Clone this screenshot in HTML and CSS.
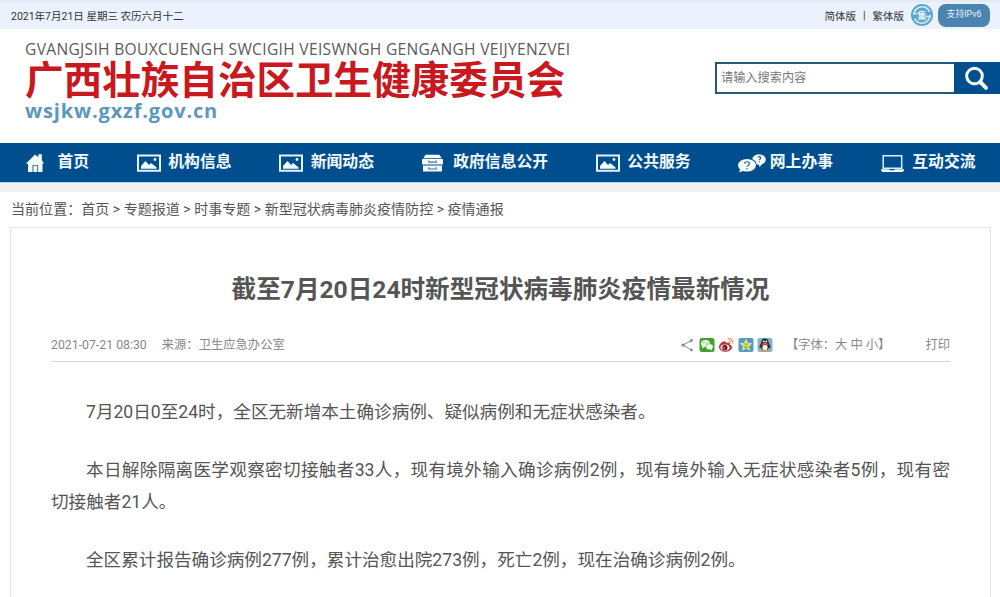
FILE: index.html
```html
<!DOCTYPE html>
<html lang="zh-CN">
<head>
    <meta charset="UTF-8">
    <title>广西壮族自治区卫生健康委员会</title>
    <link rel="stylesheet" href="styles.css">
</head>
<body>
    <div class="top-bar">
        <span class="date">2021年7月21日 星期三 农历六月十二</span>
        <div class="top-links">
            <a>简体版</a><span class="sep">|</span><a>繁体版</a>
            <svg class="badge" viewBox="0 0 22 22">
                <circle cx="11" cy="11" r="11" fill="#5fa5cf"/>
                <circle cx="11" cy="11" r="8.2" fill="none" stroke="#d8effb" stroke-width="1.6" stroke-dasharray="22 3.8"/>
                <path d="M2.5 9.5h4M15.5 12.5h4" stroke="#d8effb" stroke-width="1.5"/>
                <text x="11" y="14.5" text-anchor="middle" class="badge-text">集</text>
            </svg>
            <span class="ipv6">支持IPv6</span>
        </div>
    </div>
    <div class="header">
        <div class="logo">
            <div class="logo-zhuang">GVANGJSIH BOUXCUENGH SWCIGIH VEISWNGH GENGANGH VEIJYENZVEI</div>
            <div class="logo-name">广西壮族自治区卫生健康委员会</div>
            <div class="logo-url">wsjkw.gxzf.gov.cn</div>
        </div>
        <div class="search">
            <div class="search-input">请输入搜索内容</div>
            <div class="search-btn">
                <svg width="26" height="26" viewBox="0 0 26 26" fill="none" stroke="#f2fbff">
                    <circle cx="10.5" cy="11" r="7.8" stroke-width="3"/>
                    <path d="M16.2 17L22 22.8" stroke-width="4" stroke-linecap="round"/>
                </svg>
            </div>
        </div>
    </div>
    <div class="nav">
        <a class="nav-item">
            <svg class="nav-icon" viewBox="0 0 24 20">
                <path d="M0 10.4L9 1.5l3.4 2.8V1.2h3.4v6.1l2 2.6-1.3 1.1V19H2v-8z" fill="#f2fbff"/>
                <path d="M7 19v-6.5h4.5V19" fill="none" stroke="#5d7f9b" stroke-width="1.2"/>
            </svg>
            <span>首页</span>
        </a>
        <a class="nav-item">
            <svg class="nav-icon" viewBox="0 0 24 20">
                <path d="M1 2.5h22v15.3H1z" fill="none" stroke="#e4f4fc" stroke-width="2"/>
                <path d="M4 15.8V13l4.5-5 3.5 4 2-2 5.5 4.3v1.5z" fill="#f2fbff"/>
                <circle cx="18" cy="6.5" r="1.4" fill="#f2fbff"/>
            </svg>
            <span>机构信息</span>
        </a>
        <a class="nav-item">
            <svg class="nav-icon" viewBox="0 0 24 20">
                <path d="M1 2.5h22v15.3H1z" fill="none" stroke="#e4f4fc" stroke-width="2"/>
                <path d="M4 15.8V13l4.5-5 3.5 4 2-2 5.5 4.3v1.5z" fill="#f2fbff"/>
                <circle cx="18" cy="6.5" r="1.4" fill="#f2fbff"/>
            </svg>
            <span>新闻动态</span>
        </a>
        <a class="nav-item">
            <svg class="nav-icon" viewBox="0 0 24 20">
                <path d="M3.5 1.8h14l2.2 3.5H1.3z" fill="#f2fbff"/>
                <path d="M0 6h21v5.5H0zM1 12.5h19v6H1z" fill="#f2fbff"/>
                <path d="M6.8 7.5v1.6h7.4V7.5M6.8 14.2v1.8h7.4v-1.8" fill="none" stroke="#4f7391" stroke-width="1.2"/>
            </svg>
            <span>政府信息公开</span>
        </a>
        <a class="nav-item">
            <svg class="nav-icon" viewBox="0 0 24 20">
                <path d="M1 2.5h22v15.3H1z" fill="none" stroke="#e4f4fc" stroke-width="2"/>
                <path d="M4 15.8V13l4.5-5 3.5 4 2-2 5.5 4.3v1.5z" fill="#f2fbff"/>
                <circle cx="18" cy="6.5" r="1.4" fill="#f2fbff"/>
            </svg>
            <span>公共服务</span>
        </a>
        <a class="nav-item">
            <svg class="nav-icon" viewBox="0 0 24 20">
                <ellipse cx="21" cy="6.5" rx="6.8" ry="5.3" fill="#f2fbff"/>
                <path d="M21 11l.5 3.2 3-4z" fill="#f2fbff"/>
                <ellipse cx="9" cy="12.2" rx="10" ry="7.2" fill="#004e8e"/>
                <ellipse cx="9" cy="12.2" rx="9" ry="6.3" fill="#f2fbff"/>
                <path d="M2.5 15.5L1 19.3l5-1.5z" fill="#f2fbff"/>
                <path d="M6.6 10.6c.2-2.6 4.9-2.4 4.8.1 0 1.5-2.3 1.4-2.3 3M9 15v1.4M20 4.6c.5-1.6 3-1 2.7.5-.2.9-1.2 1-1.2 2.2M21.3 8.5v1" fill="none" stroke="#3c627f" stroke-width="1.2"/>
            </svg>
            <span>网上办事</span>
        </a>
        <a class="nav-item">
            <svg class="nav-icon" viewBox="0 0 24 20">
                <path d="M2.2 2.8h18.5v12.4H2.2z" fill="none" stroke="#d9eefa" stroke-width="1.5"/>
                <path d="M0 16.3h8.5v1h5v-1H23v1.2l-1.3 1.4H1.3L0 17.5z" fill="#f2fbff"/>
            </svg>
            <span>互动交流</span>
        </a>
    </div>
    <div class="nav-shadow"></div>
    <div class="crumbs">当前位置：首页 &gt; 专题报道 &gt; 时事专题 &gt; 新型冠状病毒肺炎疫情防控 &gt; 疫情通报</div>
    <div class="article">
        <h1>截至7月20日24时新型冠状病毒肺炎疫情最新情况</h1>
        <div class="meta">
            <span class="time">2021-07-21 08:30</span>
            <span class="source">来源：卫生应急办公室</span>
            <div class="share">
                <svg viewBox="0 0 16 16">
                    <path d="M12.5 3.5L4 8l8.5 5" fill="none" stroke="#8a8a8e"/>
                    <circle cx="12.5" cy="3.5" r="1.4" fill="#8a8a8e"/>
                    <circle cx="4" cy="8" r="1.6" fill="#8a8a8e"/>
                    <circle cx="12.5" cy="13" r="1.4" fill="#8a8a8e"/>
                </svg>
                <svg viewBox="0 0 16 16">
                    <rect x=".5" y="1" width="15" height="14" rx="2.5" fill="#42a02c"/>
                    <ellipse cx="6.5" cy="6.5" rx="4.5" ry="3.6" fill="#e9f8e2"/>
                    <path d="M3.5 8.5L3 11.5l3-1.8z" fill="#e9f8e2"/>
                    <ellipse cx="10.5" cy="9.8" rx="3.7" ry="3" fill="#fff" stroke="#42a02c" stroke-width=".6"/>
                    <path d="M11 12l2 1.4-.2-2.4z" fill="#fff"/>
                    <circle cx="5" cy="5.8" r=".6" fill="#42a02c"/>
                    <circle cx="8" cy="5.8" r=".6" fill="#42a02c"/>
                </svg>
                <svg viewBox="0 0 16 16">
                    <path d="M1 10c0-3.2 4.2-6.5 6.3-5.6 1 .4.7 1.6.7 1.6s3-1.3 3.8 0c.4.7 0 1.5 0 1.5s2.2.7 2.2 2.7c0 2.6-3.3 4.6-6.7 4.6S1 12.9 1 10z" fill="#c5323a"/>
                    <ellipse cx="7" cy="10.6" rx="4.5" ry="3.1" fill="#fbeeee"/>
                    <circle cx="6.8" cy="10.7" r="2.6" fill="#5a1a20"/>
                    <circle cx="6" cy="11" r=".8" fill="#fff"/>
                    <path d="M10 1.8c3-.8 5.5 1.7 4.6 4.7M10.5 4c1.5-.3 2.4.7 2 2" fill="none" stroke="#e8976b" stroke-width="1.2"/>
                </svg>
                <svg viewBox="0 0 16 16">
                    <rect x=".5" y="1" width="15" height="14" rx="2" fill="#4d9fc6"/>
                    <path d="M8 1.8l1.9 4 4.4.5-3.2 3 .9 4.4L8 11.5l-4 2.2.9-4.4-3.2-3 4.4-.5z" fill="#f3e37a"/>
                    <path d="M5.5 7h4.6l-4 3.4h4.4" fill="none" stroke="#8fa54d"/>
                </svg>
                <svg viewBox="0 0 16 16">
                    <rect x=".5" y="1" width="15" height="14" rx="2" fill="#7fb6d3"/>
                    <path d="M8 1.5c2.6 0 3.7 1.7 3.7 4.2 1.2 1.6 2.1 3.2 1.7 5.3l-1.4-.6c-.3 1.8-1.7 3.3-4 3.3s-3.7-1.5-4-3.3L2.6 11c-.4-2.1.5-3.7 1.7-5.3 0-2.5 1.1-4.2 3.7-4.2z" fill="#312a2e"/>
                    <ellipse cx="8" cy="10.5" rx="2.6" ry="3" fill="#f5f3f0"/>
                    <circle cx="6.7" cy="4.5" r=".9" fill="#fff"/>
                    <circle cx="9.3" cy="4.5" r=".9" fill="#fff"/>
                    <path d="M4.5 7.5h7" stroke="#cf3f35" stroke-width="1.5"/>
                    <path d="M5.8 6h4.4L8 7.3zM3.5 13.2h3.8v1.5H3.5zM8.7 13.2h3.8v1.5H8.7z" fill="#e89a36"/>
                </svg>
            </div>
            <span class="font-size">【字体：大 中 小】</span>
            <span class="print">打印</span>
        </div>
        <div class="content">
            <p>7月20日0至24时，全区无新增本土确诊病例、疑似病例和无症状感染者。</p>
            <p>本日解除隔离医学观察密切接触者33人，现有境外输入确诊病例2例，现有境外输入无症状感染者5例，现有密切接触者21人。</p>
            <p>全区累计报告确诊病例277例，累计治愈出院273例，死亡2例，现在治确诊病例2例。</p>
        </div>
    </div>
</body>
</html>
```
FILE: styles.css
```css
* {
    box-sizing: border-box;
}
body {
    margin: 0;
    height: 597px;
    overflow: hidden;
    background: #fff;
    color: #555;
    font-family: Roboto, "Noto Sans CJK SC", sans-serif;
    display: flex;
    flex-direction: column;
}
.top-bar {
    flex: none;
    height: 29px;
    padding: 0 10px 1px 11px;
    background: #ebf2fd;
    border-top: 2px solid #e3eaf3;
    display: flex;
    justify-content: space-between;
    align-items: center;
    font-size: 10.5px;
    color: #333;
}
.top-links {
    display: flex;
    align-items: center;
}
.sep {
    margin: 0 7px;
}
.badge {
    width: 22px;
    height: 22px;
    margin: 0 5px 0 7px;
}
.badge-text {
    font-size: 9px;
    font-weight: bold;
    fill: #e8f7ff;
}
.ipv6 {
    width: 52px;
    height: 23px;
    line-height: 20px;
    border-radius: 8px;
    background: #4c84b0;
    color: #e6f2fa;
    font-size: 8.8px;
    text-align: center;
}
.header {
    flex: none;
    height: 114px;
    padding-left: 25px;
    display: flex;
    justify-content: space-between;
}
.logo {
    padding-top: 10px;
    white-space: nowrap;
}
.logo-zhuang {
    font: 15.6px/20px "Open Sans", sans-serif;
    letter-spacing: 0.3px;
    color: #5c5c5c;
}
.logo-name {
    font-size: 38.6px;
    line-height: 43px;
    font-weight: bold;
    color: #c9181e;
}
.logo-url {
    font: bold 20px/18px "Open Sans", sans-serif;
    letter-spacing: 0.85px;
    color: #5c97be;
}
.search {
    width: 285px;
    height: 32px;
    margin-top: 33px;
    display: flex;
}
.search-input {
    width: 239px;
    padding-left: 4px;
    border: 2px solid #265878;
    border-right: none;
    font-size: 12.2px;
    line-height: 29px;
    color: #777;
}
.search-btn {
    flex: 1;
    background: #004e8e;
    display: flex;
    align-items: center;
    justify-content: center;
}
.nav {
    flex: none;
    height: 39px;
    padding-left: 26px;
    background: #004e8e;
    display: flex;
    gap: 47.9px;
    color: #f2fbff;
    font-size: 15.8px;
    font-weight: bold;
    line-height: 37px;
    white-space: nowrap;
}
.nav-item {
    display: flex;
}
.nav-icon {
    width: 24px;
    height: 20px;
    margin: 10px 7.4px 0 0;
    overflow: visible;
}
.nav-shadow {
    flex: none;
    height: 10px;
    background: #f1f1f1;
    border-top: 1px solid #b5d4ea;
}
.crumbs {
    flex: none;
    height: 35px;
    padding-left: 11px;
    font-size: 14.05px;
    line-height: 34px;
    white-space: nowrap;
}
.article {
    flex: 1;
    margin: 0 9px 0 10px;
    padding: 0 40px;
    border: 1px solid #e4e4e4;
    border-bottom: none;
}
h1 {
    margin: 44px 0 0;
    font-size: 24.6px;
    line-height: 36px;
    font-weight: bold;
    text-align: center;
    white-space: nowrap;
}
.meta {
    height: 54px;
    padding-top: 20px;
    border-bottom: 1px solid #d5d5d5;
    display: flex;
    align-items: center;
    font-size: 12.3px;
    line-height: 32px;
    color: #888;
}
.source {
    margin-left: 15px;
}
.share {
    display: flex;
    gap: 3.4px;
    margin-left: auto;
}
.share svg {
    width: 16px;
    height: 16px;
}
.font-size {
    margin-left: 13px;
}
.print {
    margin-left: 35px;
}
.content {
    padding-top: 34px;
    font-size: 17.6px;
    line-height: 32.5px;
}
.content p {
    margin: 0 0 25px;
    text-indent: 35px;
    text-align: justify;
}
```
